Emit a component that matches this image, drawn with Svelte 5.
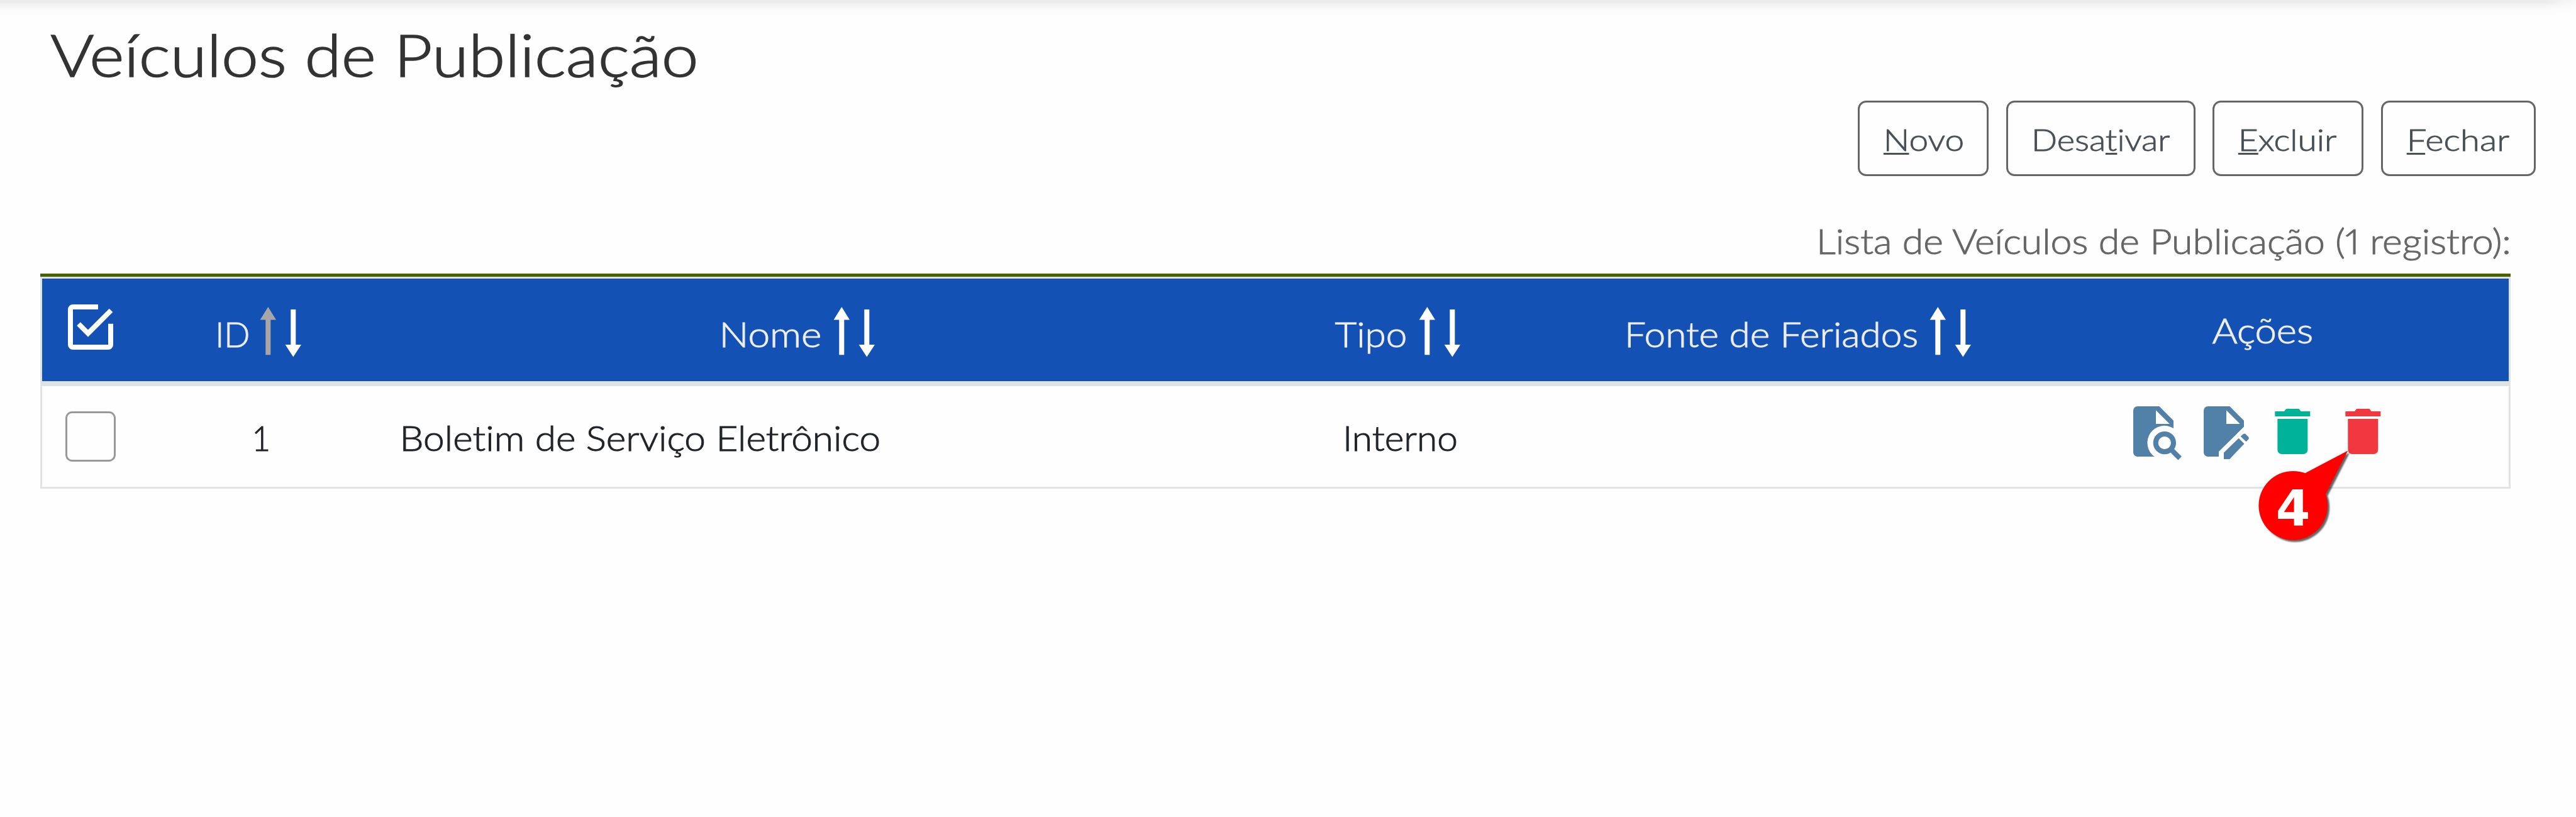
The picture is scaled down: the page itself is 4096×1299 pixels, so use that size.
<script>
  // width: drawn width of the text; scale: horizontal stretch; bearing: left side bearing before the stretch
  const title = { text: 'Veículos de Publicação', width: 1025, scale: 1.1323, bearing: 1.5 };
  const caption = { text: 'Lista de Veículos de Publicação (1 registro):', width: 1098, scale: 1.0845, bearing: 4.5 };
  const buttons = [
    { before: '', key: 'N', after: 'ovo', size: 208, width: 122, scale: 1.145 },
    { before: 'Desa', key: 't', after: 'ivar', size: 301, width: 217, scale: 1.128 },
    { before: '', key: 'E', after: 'xcluir', size: 240, width: 152, scale: 1.147 },
    { before: '', key: 'F', after: 'echar', size: 246, width: 159, scale: 1.172 }
  ];
  const columns = [
    { name: 'id', text: 'ID', width: 48, scale: 0.9678, bearing: 5, sorted: true },
    { name: 'nome', text: 'Nome', width: 157, scale: 1.11, bearing: 5 },
    { name: 'tipo', text: 'Tipo', width: 114, scale: 1.075, bearing: 0.5 },
    { name: 'fonte', text: 'Fonte de Feriados', width: 462, scale: 1.078, bearing: 4.7 }
  ];
  const acoes = { text: 'Ações', width: 160, scale: 1.1, bearing: 0.5 };
  const row = [
    { name: 'id', text: '1', width: 21, scale: 0.913, bearing: 6 },
    { name: 'nome', text: 'Boletim de Serviço Eletrônico', width: 759, scale: 1.0785, bearing: 5.2 },
    { name: 'tipo', text: 'Interno', width: 178, scale: 1.046, bearing: 4.7 }
  ];
</script>

{#snippet label(t)}
  <span class="label" style:width="{t.width}px"><span class="stretch" style:transform="scaleX({t.scale}) translateX({-t.bearing}px)">{t.text}</span></span>
{/snippet}

{#snippet trash(color)}
  <svg class="icon {color}" viewBox="0 0 29 32">
    <path d="M.5 3H6L7.2 1.5H14.8L16 3H21.500V6H.5Z" />
    <path d="M2 7.500H20V26a2.500 2.500 0 0 1-2.500 2.500H4.500A2.500 2.500 0 0 1 2 26Z" />
  </svg>
{/snippet}

<div class="page">
  <div class="topshade"></div>
  <h1>{@render label(title)}</h1>

  <div class="toolbar">
    {#each buttons as b}
      <button type="button" style:width="{b.size}px"><span class="label" style:width="{b.width}px"><span class="stretch" style:transform="scaleX({b.scale}) translateX(-4.5px)">{b.before}<u>{b.key}</u>{b.after}</span></span></button>
    {/each}
  </div>

  <div class="caption">{@render label(caption)}</div>

  <div class="table">
    <div class="row head">
      <div class="cell check">
        <svg class="checkall" viewBox="0 0 84 80">
          <path d="M52 8H12a4 4 0 0 0-4 4V68a4 4 0 0 0 4 4H68a4 4 0 0 0 4-4V34.700" />
          <path d="M21 35L36 50L72.500 13.500" />
        </svg>
      </div>
      {#each columns as c}
        <div class="cell {c.name}">
          {@render label(c)}
          <svg class="sort" viewBox="0 0 68 84">
            <g class:active={c.sorted}>
              <path d="M13.300 2L26 22.500H17.300V78.300H9.300V22.500H.600Z" />
            </g>
            <path d="M53.300 81.500L40.600 62H49.300V6H57.300V62H66Z" />
          </svg>
        </div>
      {/each}
      <div class="cell acoes">{@render label(acoes)}</div>
    </div>

    <div class="row body">
      <div class="cell check"><span class="box"></span></div>
      {#each row as c}
        <div class="cell {c.name}">{@render label(c)}</div>
      {/each}
      <div class="cell fonte"></div>
      <div class="cell acoes">
        <svg class="icon blue" viewBox="0 0 29 32">
          <path fill-rule="evenodd" d="M2.500 0H15.500L24 8.500V13.100A10.200 10.200 0 0 0 12.600 30H2.500A2.500 2.500 0 0 1 0 27.500V2.500A2.500 2.500 0 0 1 2.500 0ZM13.500 2.300V10.500H21.700Z" />
          <circle class="line" cx="18.700" cy="21.800" r="5.300" />
          <path class="line" d="M22.800 26L27.800 31" />
        </svg>
        <svg class="icon blue" viewBox="0 0 29 32">
          <path fill-rule="evenodd" d="M2.500 0H15.500L24 8.500V12.200L9 27V30H2.500A2.500 2.500 0 0 1 0 27.500V2.500A2.500 2.500 0 0 1 2.500 0ZM13.500 2.300V10.500H21.700Z" />
          <path d="M12 27.700L20.900 19L24.200 22.300L15.500 31.500H12Z" />
          <path d="M22 17.900L23.600 16.500Q24.400 16 25.200 16.800L26.700 18.300Q27.300 19 26.700 19.700L25.300 21.100Z" />
        </svg>
        {@render trash('green')}
        {@render trash('red')}
        <svg class="balloon" viewBox="0 0 170 170">
          <g class="shape">
            <path d="M84.900 46.400L153.300 10.400L118.200 79.300L66 98Z" />
            <circle cx="66.300" cy="97.800" r="54.900" />
          </g>
          <text x="66.200" y="129.300" text-anchor="middle">4</text>
        </svg>
      </div>
    </div>
  </div>
</div>

<style>
  :global(body) {
    background: #fefefe;
  }
  .page {
    position: relative;
    display: flex;
    flex-direction: column;
    width: 4096px;
    height: 1299px;
    overflow: hidden;
    background: #fefefe;
    font-family: Lato, 'Open Sans', sans-serif;
    font-weight: 300;
    font-variant-ligatures: none;
    line-height: 1;
    color: #212529;
  }
  .topshade {
    position: absolute;
    top: 0;
    left: 0;
    width: 100%;
    height: 28px;
    background: linear-gradient(#ebebeb 0, #ececec 3px, #f4f4f4 9px, #f9f9f9 14px, #fcfcfc 19px, #fefefe 28px);
    mask-image: linear-gradient(90deg, #000 calc(100% - 50px), rgba(0, 0, 0, 0.3));
  }
  .label {
    display: block;
    flex: none;
    white-space: nowrap;
    text-align: left;
    font-size: 56px;
    height: 56px;
    -webkit-text-stroke: 0.018em currentColor;
  }
  .stretch {
    display: inline-block;
    transform-origin: 0 50%;
  }
  h1 {
    margin: 39.7px 0 0 82px;
    font-weight: 300;
    color: #333;
  }
  h1 .label {
    font-size: 93.3px;
    height: 93.3px;
  }
  .toolbar {
    display: flex;
    justify-content: flex-end;
    gap: 27.67px;
    margin-top: 27px;
    padding-right: 64px;
  }
  button {
    box-sizing: border-box;
    height: 120px;
    margin: 0;
    padding: 34.7px 0 0 42.500px;
    display: flex;
    align-items: flex-start;
    border: 3px solid #666;
    border-radius: 13.3px;
    background: transparent;
    color: #495057;
    font: inherit;
  }
  button .label {
    font-size: 48px;
    height: 48px;
  }
  u {
    text-decoration-thickness: 2.67px;
    text-underline-offset: 3px;
    text-decoration-skip-ink: none;
  }
  .caption {
    display: flex;
    justify-content: flex-end;
    margin-top: 75.3px;
    padding-right: 105px;
    color: #666;
    font-variant-numeric: proportional-nums;
  }
  .table {
    margin: 23.700px 104px 0 64px;
    border-top: 5px solid #496100;
  }
  .row {
    display: grid;
    grid-template-columns: 143.3px 410px 1300px 610px 670px 1fr;
    border: 3px solid #e3e3e3;
  }
  .head {
    height: 162.6px;
    background: #1351b4;
    background-clip: padding-box;
    border-color: #dee2e6;
    border-bottom: 0;
    color: #ededed;
  }
  .body {
    height: 160px;
    border-top: 8px solid #dee2e6;
  }
  .cell {
    display: flex;
    align-items: flex-start;
  }
  .head .label {
    margin-top: 59.6px;
  }
  .head .acoes .label {
    margin-top: 54.2px;
  }
  .body .label {
    margin-top: 54px;
  }
  .cell.check { padding-left: 37.3px; }
  .head .id { padding-left: 136.5px; }
  .head .nome { padding-left: 529px; }
  .head .tipo { padding-left: 203px; }
  .head .fonte { padding-left: 57.500px; }
  .head .acoes { padding-left: 317.500px; }
  .body .id { padding-left: 195.5px; }
  .body .nome { padding-left: 20.500px; }
  .body .tipo { padding-left: 219.500px; }
  .body .acoes {
    position: relative;
    gap: 34.67px;
    padding: 32px 0 0 192px;
  }
  .checkall {
    width: 84px;
    height: 80px;
    margin-top: 37.3px;
    fill: none;
    stroke: #fff;
    stroke-width: 8;
  }
  .sort {
    flex: none;
    width: 68px;
    height: 84px;
    margin: 43.3px 0 0 18.500px;
    fill: #fff;
  }
  .active {
    fill: #a6a6a6;
  }
  .box {
    box-sizing: border-box;
    width: 80px;
    height: 80px;
    margin-top: 40px;
    border: 3px solid #999;
    border-radius: 10.67px;
  }
  .icon {
    flex: none;
    width: 77.33px;
    height: 85.33px;
    overflow: visible;
  }
  .blue { fill: #5181a6; }
  .green { fill: #00b398; }
  .red { fill: #f1383f; }
  .line {
    fill: none;
    stroke: #5181a6;
    stroke-width: 3;
  }
  .balloon {
    position: absolute;
    left: 380px;
    top: 92.7px;
    width: 170px;
    height: 170px;
    overflow: visible;
  }
  .shape {
    fill: #f00;
    filter: drop-shadow(3px 3px 1.300px rgba(0, 0, 0, 0.6));
  }
  .balloon text {
    fill: #fff;
    font: bold 78.6px 'DejaVu Sans', sans-serif;
  }
</style>
